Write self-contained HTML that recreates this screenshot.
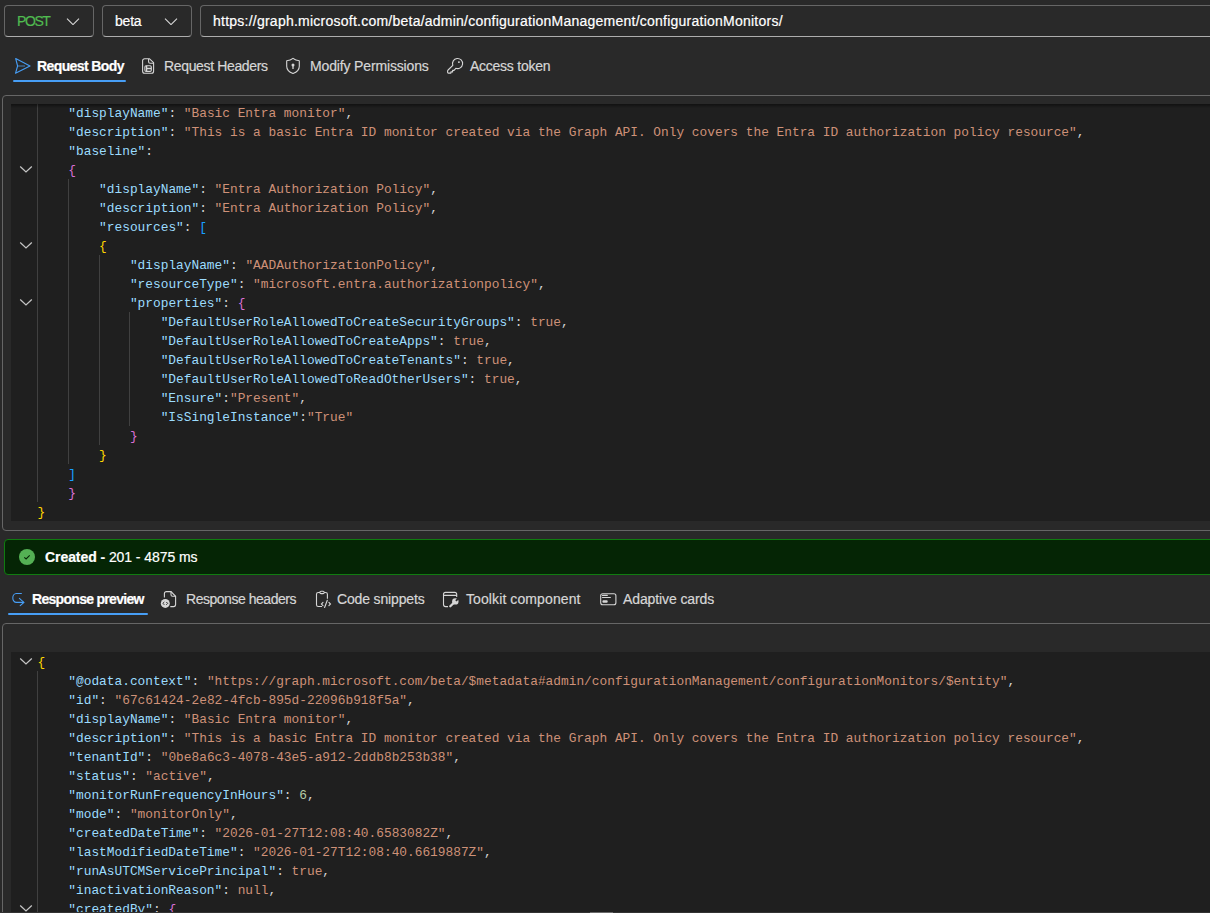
<!DOCTYPE html>
<html><head><meta charset="utf-8"><style>
html,body{margin:0;padding:0;width:1210px;height:913px;overflow:hidden;background:#292929}
.ab{position:absolute}
.t{position:absolute;white-space:pre;line-height:20px;font-family:"Liberation Sans",sans-serif;-webkit-text-stroke:0.2px currentColor}
.cl{position:absolute;left:37.5px;white-space:pre;line-height:19px;height:19px;font-family:"Liberation Mono",monospace;font-size:12.840px;color:#d4d4d4}
</style></head><body>
<div class="ab" style="left:4px;top:5px;width:90px;height:32px;box-sizing:border-box;border:1px solid #666666;border-bottom-color:#adadad;border-radius:4px"></div>
<div class="ab" style="left:102px;top:5px;width:90px;height:32px;box-sizing:border-box;border:1px solid #666666;border-bottom-color:#adadad;border-radius:4px"></div>
<div class="ab" style="left:200px;top:5px;width:1100px;height:32px;box-sizing:border-box;border:1px solid #666666;border-bottom-color:#adadad;border-radius:4px"></div>
<div class="t" style="left:17px;top:11px;font-size:14px;font-weight:400;color:#50bb50;letter-spacing:-1.4px">POST</div>
<div class="t" style="left:115px;top:11px;font-size:14px;font-weight:400;color:#ffffff;letter-spacing:-0.2px">beta</div>
<div class="t" style="left:213px;top:11px;font-size:14px;font-weight:400;color:#ffffff;letter-spacing:0.24px">https://graph.microsoft.com/beta/admin/configurationManagement/configurationMonitors/</div>
<svg class="ab" width="14" height="8" style="left:66px;top:17px"><path d="M1 1.6 L7 7.6 L13 1.6" fill="none" stroke="#d6d6d6" stroke-width="1.1"/></svg>
<svg class="ab" width="14" height="8" style="left:164px;top:17px"><path d="M1 1.6 L7 7.6 L13 1.6" fill="none" stroke="#d6d6d6" stroke-width="1.1"/></svg>
<svg class="ab" width="20" height="20" style="left:13px;top:56px" viewBox="0 0 20 20"><path d="M2.7 2.6 L17 10 L2.5 17.3 L4.6 10 Z" fill="none" stroke="#479ef5" stroke-width="1.1" stroke-linejoin="round"/><path d="M4.6 10 H12" stroke="#479ef5" stroke-opacity="0.7" stroke-width="1.1"/></svg>
<div class="t" style="left:37px;top:56px;font-size:14px;font-weight:700;color:#ffffff;letter-spacing:-0.6px">Request Body</div>
<div class="ab" style="left:13px;top:80px;width:113px;height:2px;background:#479ef5;border-radius:1px"></div>
<svg class="ab" width="20" height="20" style="left:138px;top:56px" viewBox="0 0 20 20"><path d="M6.6 2.7 H11.3 L15.6 6.6 V15.3 A2 2 0 0 1 13.6 17.3 H6.6 A2 2 0 0 1 4.6 15.3 V4.7 A2 2 0 0 1 6.6 2.7 Z" fill="none" stroke="#d6d6d6" stroke-width="1.1" stroke-linejoin="round"/><path d="M10.6 2.9 V5.7 A1.5 1.5 0 0 0 12.1 7.2 H15.6" fill="none" stroke="#d6d6d6" stroke-width="1.1"/><rect x="6.9" y="9.8" width="6.4" height="5.6" rx="1.2" fill="none" stroke="#d6d6d6" stroke-width="1.1"/><path d="M8.6 9.8 V15.4 M8.6 12.5 H13.3" stroke="#d6d6d6" stroke-width="1.3"/></svg>
<div class="t" style="left:164px;top:56px;font-size:14px;font-weight:400;color:#d6d6d6;letter-spacing:-0.35px">Request Headers</div>
<svg class="ab" width="20" height="20" style="left:283px;top:56px" viewBox="0 0 20 20"><path d="M10 2.4 C11.8 3.9 13.8 4.6 16.3 4.8 V10.2 C16.3 13.6 14 16 10 17.5 C6 16 3.7 13.6 3.7 10.2 V4.8 C6.2 4.6 8.2 3.9 10 2.4 Z" fill="none" stroke="#d6d6d6" stroke-width="1.1" stroke-linejoin="round"/><circle cx="10" cy="9" r="1.5" fill="#d6d6d6"/><rect x="9.35" y="9.5" width="1.3" height="3.5" fill="#d6d6d6"/></svg>
<div class="t" style="left:310px;top:56px;font-size:14px;font-weight:400;color:#d6d6d6;letter-spacing:-0.15px">Modify Permissions</div>
<svg class="ab" width="22" height="22" style="left:443px;top:55px" viewBox="0 0 22 22"><path d="M9.81 10.28 L5.1 15 A1.6 1.6 0 0 0 4.6 16.1 V17.3 A0.8 0.8 0 0 0 5.4 18.1 H7.9 V16.9 H9.6 V15.4 H11 L12.83 13.3 A5.05 5.05 0 1 0 9.81 10.28 Z" fill="none" stroke="#d6d6d6" stroke-width="1.1" stroke-linejoin="round"/><rect x="15.1" y="6.35" width="1.6" height="1.6" fill="#d6d6d6"/></svg>
<div class="t" style="left:470px;top:56px;font-size:14px;font-weight:400;color:#d6d6d6;letter-spacing:-0.25px">Access token</div>
<div class="ab" style="left:2px;top:95px;width:1300px;height:436px;box-sizing:border-box;border:1px solid #666666;border-radius:4px"></div>
<div class="ab" style="left:11px;top:104px;width:1300px;height:417px;background:#1f1f1f;overflow:hidden" id="req"></div>
<div class="ab" style="left:37px;top:104px;width:1px;height:397.5px;background:#404040"></div>
<div class="ab" style="left:68px;top:178.5px;width:1px;height:285.0px;background:#404040"></div>
<div class="ab" style="left:99px;top:254.5px;width:1px;height:190.0px;background:#404040"></div>
<div class="ab" style="left:129px;top:311.5px;width:1px;height:114.0px;background:#404040"></div>
<div class="cl" style="top:104px">    <span style="color:#9cdcfe">&quot;displayName&quot;</span><span style="color:#d4d4d4">: </span><span style="color:#ce9178">&quot;Basic Entra monitor&quot;</span><span style="color:#d4d4d4">,</span></div>
<div class="cl" style="top:123px">    <span style="color:#9cdcfe">&quot;description&quot;</span><span style="color:#d4d4d4">: </span><span style="color:#ce9178">&quot;This is a basic Entra ID monitor created via the Graph API. Only covers the Entra ID authorization policy resource&quot;</span><span style="color:#d4d4d4">,</span></div>
<div class="cl" style="top:142px">    <span style="color:#9cdcfe">&quot;baseline&quot;</span><span style="color:#d4d4d4">:</span></div>
<div class="cl" style="top:161px">    <span style="color:#da70d6">{</span></div>
<div class="cl" style="top:180px">        <span style="color:#9cdcfe">&quot;displayName&quot;</span><span style="color:#d4d4d4">: </span><span style="color:#ce9178">&quot;Entra Authorization Policy&quot;</span><span style="color:#d4d4d4">,</span></div>
<div class="cl" style="top:199px">        <span style="color:#9cdcfe">&quot;description&quot;</span><span style="color:#d4d4d4">: </span><span style="color:#ce9178">&quot;Entra Authorization Policy&quot;</span><span style="color:#d4d4d4">,</span></div>
<div class="cl" style="top:218px">        <span style="color:#9cdcfe">&quot;resources&quot;</span><span style="color:#d4d4d4">: </span><span style="color:#179fff">[</span></div>
<div class="cl" style="top:237px">        <span style="color:#ffd700">{</span></div>
<div class="cl" style="top:256px">            <span style="color:#9cdcfe">&quot;displayName&quot;</span><span style="color:#d4d4d4">: </span><span style="color:#ce9178">&quot;AADAuthorizationPolicy&quot;</span><span style="color:#d4d4d4">,</span></div>
<div class="cl" style="top:275px">            <span style="color:#9cdcfe">&quot;resourceType&quot;</span><span style="color:#d4d4d4">: </span><span style="color:#ce9178">&quot;microsoft.entra.authorizationpolicy&quot;</span><span style="color:#d4d4d4">,</span></div>
<div class="cl" style="top:294px">            <span style="color:#9cdcfe">&quot;properties&quot;</span><span style="color:#d4d4d4">: </span><span style="color:#da70d6">{</span></div>
<div class="cl" style="top:313px">                <span style="color:#9cdcfe">&quot;DefaultUserRoleAllowedToCreateSecurityGroups&quot;</span><span style="color:#d4d4d4">: </span><span style="color:#ce9178">true</span><span style="color:#d4d4d4">,</span></div>
<div class="cl" style="top:332px">                <span style="color:#9cdcfe">&quot;DefaultUserRoleAllowedToCreateApps&quot;</span><span style="color:#d4d4d4">: </span><span style="color:#ce9178">true</span><span style="color:#d4d4d4">,</span></div>
<div class="cl" style="top:351px">                <span style="color:#9cdcfe">&quot;DefaultUserRoleAllowedToCreateTenants&quot;</span><span style="color:#d4d4d4">: </span><span style="color:#ce9178">true</span><span style="color:#d4d4d4">,</span></div>
<div class="cl" style="top:370px">                <span style="color:#9cdcfe">&quot;DefaultUserRoleAllowedToReadOtherUsers&quot;</span><span style="color:#d4d4d4">: </span><span style="color:#ce9178">true</span><span style="color:#d4d4d4">,</span></div>
<div class="cl" style="top:389px">                <span style="color:#9cdcfe">&quot;Ensure&quot;</span><span style="color:#d4d4d4">:</span><span style="color:#ce9178">&quot;Present&quot;</span><span style="color:#d4d4d4">,</span></div>
<div class="cl" style="top:408px">                <span style="color:#9cdcfe">&quot;IsSingleInstance&quot;</span><span style="color:#d4d4d4">:</span><span style="color:#ce9178">&quot;True&quot;</span></div>
<div class="cl" style="top:427px">            <span style="color:#da70d6">}</span></div>
<div class="cl" style="top:446px">        <span style="color:#ffd700">}</span></div>
<div class="cl" style="top:465px">    <span style="color:#179fff">]</span></div>
<div class="cl" style="top:484px">    <span style="color:#da70d6">}</span></div>
<div class="cl" style="top:503px"><span style="color:#ffd700">}</span></div>
<svg class="ab" width="14" height="8" style="left:19px;top:165px"><path d="M1.2 1.5 L7 7 L12.8 1.5" fill="none" stroke="#c5c5c5" stroke-width="1.25"/></svg>
<svg class="ab" width="14" height="8" style="left:19px;top:241px"><path d="M1.2 1.5 L7 7 L12.8 1.5" fill="none" stroke="#c5c5c5" stroke-width="1.25"/></svg>
<svg class="ab" width="14" height="8" style="left:19px;top:298px"><path d="M1.2 1.5 L7 7 L12.8 1.5" fill="none" stroke="#c5c5c5" stroke-width="1.25"/></svg>
<div class="ab" style="left:11px;top:104px;width:1300px;height:4px;background:linear-gradient(rgba(0,0,0,0.45),rgba(0,0,0,0))"></div>
<div class="ab" style="left:4px;top:539px;width:1300px;height:36px;box-sizing:border-box;border:1px solid #107c10;background:#052505;border-radius:4px"></div>
<svg class="ab" width="16" height="16" style="left:19px;top:549px" viewBox="0 0 16 16"><circle cx="8" cy="8" r="8" fill="#54b054"/><path d="M5.3 8.3 L7.1 10 L10.7 6.4" fill="none" stroke="#052505" stroke-width="1.1"/></svg>
<div class="t" style="left:45px;top:547px;font-size:14px;color:#fff;letter-spacing:-0.07px"><b>Created -</b> 201 - 4875 ms</div>
<svg class="ab" width="20" height="20" style="left:8px;top:590px" viewBox="0 0 20 20"><path d="M13.8 3.45 H8.3 A3.5 4.475 0 0 0 8.3 12.4 H15.9" fill="none" stroke="#479ef5" stroke-width="1.1"/><path d="M11.4 8.3 L15.9 12.4 L12.2 15.6" fill="none" stroke="#479ef5" stroke-width="1.1" stroke-linecap="round"/></svg>
<div class="t" style="left:32px;top:589px;font-size:14px;font-weight:700;color:#ffffff;letter-spacing:-0.7px">Response preview</div>
<div class="ab" style="left:8px;top:613px;width:140px;height:2px;background:#479ef5;border-radius:1px"></div>
<svg class="ab" width="20" height="20" style="left:158px;top:589px" viewBox="0 0 20 20"><path d="M6.4 8.5 V4.6 A2 2 0 0 1 8.4 2.6 H13 L17.6 7.3 V15.6 A2 2 0 0 1 15.6 17.6 H12.3" fill="none" stroke="#d6d6d6" stroke-width="1.1"/><path d="M13 2.6 V5.8 A1.5 1.5 0 0 0 14.5 7.3 H17.6" fill="none" stroke="#d6d6d6" stroke-width="1.1"/><circle cx="7.3" cy="14.4" r="4.5" fill="#d6d6d6"/><path d="M6.3 13 L4.9 14.4 L6.3 15.8 M8.3 13 L9.7 14.4 L8.3 15.8" fill="none" stroke="#292929" stroke-width="1"/></svg>
<div class="t" style="left:186px;top:589px;font-size:14px;font-weight:400;color:#d6d6d6;letter-spacing:-0.47px">Response headers</div>
<svg class="ab" width="22" height="20" style="left:311px;top:589px" viewBox="0 0 22 20"><path d="M11 17.5 H7.3 A1.8 1.8 0 0 1 5.5 15.7 V5.3 A1.8 1.8 0 0 1 7.3 3.5 H14.6 A1.8 1.8 0 0 1 16.4 5.3 V9.8" fill="none" stroke="#d6d6d6" stroke-width="1.1"/><rect x="8.9" y="2.3" width="4.3" height="2.3" rx="1.1" fill="#292929" stroke="#d6d6d6" stroke-width="1.1"/><path d="M12 13.3 L10.4 15 L12 16.7 M17.9 13.3 L19.5 15 L17.9 16.7 M16.3 11.2 L13.6 18.5" fill="none" stroke="#d6d6d6" stroke-width="1.1" stroke-linecap="round"/></svg>
<div class="t" style="left:337px;top:589px;font-size:14px;font-weight:400;color:#d6d6d6;letter-spacing:-0.15px">Code snippets</div>
<svg class="ab" width="22" height="22" style="left:438px;top:588px" viewBox="0 0 22 22"><path d="M10 18.6 H7.5 A2 2 0 0 1 5.5 16.6 V6.4 A2 2 0 0 1 7.5 4.4 H16.7 A2 2 0 0 1 18.7 6.4 V9 M5.5 7.4 H18.7" fill="none" stroke="#d6d6d6" stroke-width="1.1"/><path d="M12.3 18.3 L15.6 15" stroke="#d6d6d6" stroke-width="2.3" stroke-linecap="round"/><circle cx="17.3" cy="13.4" r="3.2" fill="#d6d6d6"/><path d="M17.9 12.8 L21.5 9.2" stroke="#292929" stroke-width="1.9"/></svg>
<div class="t" style="left:466px;top:589px;font-size:14px;font-weight:400;color:#d6d6d6;letter-spacing:0.1px">Toolkit component</div>
<svg class="ab" width="20" height="20" style="left:598px;top:589px" viewBox="0 0 20 20"><rect x="2.7" y="4.7" width="15.2" height="11.1" rx="2" fill="none" stroke="#d6d6d6" stroke-width="1.1"/><path d="M4.5 6.4 H9.3 M4.5 8.5 H12.4" stroke="#d6d6d6" stroke-width="1.1" stroke-linecap="round"/><rect x="4.4" y="11.3" width="5.3" height="2.5" rx="1" fill="#d6d6d6"/></svg>
<div class="t" style="left:623px;top:589px;font-size:14px;font-weight:400;color:#d6d6d6;letter-spacing:-0.1px">Adaptive cards</div>
<div class="ab" style="left:2px;top:623px;width:1300px;height:400px;box-sizing:border-box;border:1px solid #666666;border-radius:4px"></div>
<div class="ab" style="left:11px;top:652px;width:1300px;height:260px;background:#1f1f1f"></div>
<div class="ab" style="left:37px;top:671px;width:1px;height:241px;background:#404040"></div>
<div class="cl" style="top:653px"><span style="color:#ffd700">{</span></div>
<div class="cl" style="top:672px">    <span style="color:#9cdcfe">&quot;@odata.context&quot;</span><span style="color:#d4d4d4">: </span><span style="color:#ce9178">&quot;https://graph.microsoft.com/beta/$metadata#admin/configurationManagement/configurationMonitors/$entity&quot;</span><span style="color:#d4d4d4">,</span></div>
<div class="cl" style="top:691px">    <span style="color:#9cdcfe">&quot;id&quot;</span><span style="color:#d4d4d4">: </span><span style="color:#ce9178">&quot;67c61424-2e82-4fcb-895d-22096b918f5a&quot;</span><span style="color:#d4d4d4">,</span></div>
<div class="cl" style="top:710px">    <span style="color:#9cdcfe">&quot;displayName&quot;</span><span style="color:#d4d4d4">: </span><span style="color:#ce9178">&quot;Basic Entra monitor&quot;</span><span style="color:#d4d4d4">,</span></div>
<div class="cl" style="top:729px">    <span style="color:#9cdcfe">&quot;description&quot;</span><span style="color:#d4d4d4">: </span><span style="color:#ce9178">&quot;This is a basic Entra ID monitor created via the Graph API. Only covers the Entra ID authorization policy resource&quot;</span><span style="color:#d4d4d4">,</span></div>
<div class="cl" style="top:748px">    <span style="color:#9cdcfe">&quot;tenantId&quot;</span><span style="color:#d4d4d4">: </span><span style="color:#ce9178">&quot;0be8a6c3-4078-43e5-a912-2ddb8b253b38&quot;</span><span style="color:#d4d4d4">,</span></div>
<div class="cl" style="top:767px">    <span style="color:#9cdcfe">&quot;status&quot;</span><span style="color:#d4d4d4">: </span><span style="color:#ce9178">&quot;active&quot;</span><span style="color:#d4d4d4">,</span></div>
<div class="cl" style="top:786px">    <span style="color:#9cdcfe">&quot;monitorRunFrequencyInHours&quot;</span><span style="color:#d4d4d4">: </span><span style="color:#b5cea8">6</span><span style="color:#d4d4d4">,</span></div>
<div class="cl" style="top:805px">    <span style="color:#9cdcfe">&quot;mode&quot;</span><span style="color:#d4d4d4">: </span><span style="color:#ce9178">&quot;monitorOnly&quot;</span><span style="color:#d4d4d4">,</span></div>
<div class="cl" style="top:824px">    <span style="color:#9cdcfe">&quot;createdDateTime&quot;</span><span style="color:#d4d4d4">: </span><span style="color:#ce9178">&quot;2026-01-27T12:08:40.6583082Z&quot;</span><span style="color:#d4d4d4">,</span></div>
<div class="cl" style="top:843px">    <span style="color:#9cdcfe">&quot;lastModifiedDateTime&quot;</span><span style="color:#d4d4d4">: </span><span style="color:#ce9178">&quot;2026-01-27T12:08:40.6619887Z&quot;</span><span style="color:#d4d4d4">,</span></div>
<div class="cl" style="top:862px">    <span style="color:#9cdcfe">&quot;runAsUTCMServicePrincipal&quot;</span><span style="color:#d4d4d4">: </span><span style="color:#ce9178">true</span><span style="color:#d4d4d4">,</span></div>
<div class="cl" style="top:881px">    <span style="color:#9cdcfe">&quot;inactivationReason&quot;</span><span style="color:#d4d4d4">: </span><span style="color:#ce9178">null</span><span style="color:#d4d4d4">,</span></div>
<div class="cl" style="top:900px">    <span style="color:#9cdcfe">&quot;createdBy&quot;</span><span style="color:#d4d4d4">: </span><span style="color:#da70d6">{</span></div>
<svg class="ab" width="14" height="8" style="left:19px;top:657px"><path d="M1.2 1.5 L7 7 L12.8 1.5" fill="none" stroke="#c5c5c5" stroke-width="1.25"/></svg>
<svg class="ab" width="14" height="8" style="left:19px;top:904px"><path d="M1.2 1.5 L7 7 L12.8 1.5" fill="none" stroke="#c5c5c5" stroke-width="1.25"/></svg>
<div class="ab" style="left:0;top:912px;width:1210px;height:1px;background:#333"></div>
<div class="ab" style="left:590px;top:912px;width:23px;height:1px;background:#6a6a6a"></div>
</body></html>
